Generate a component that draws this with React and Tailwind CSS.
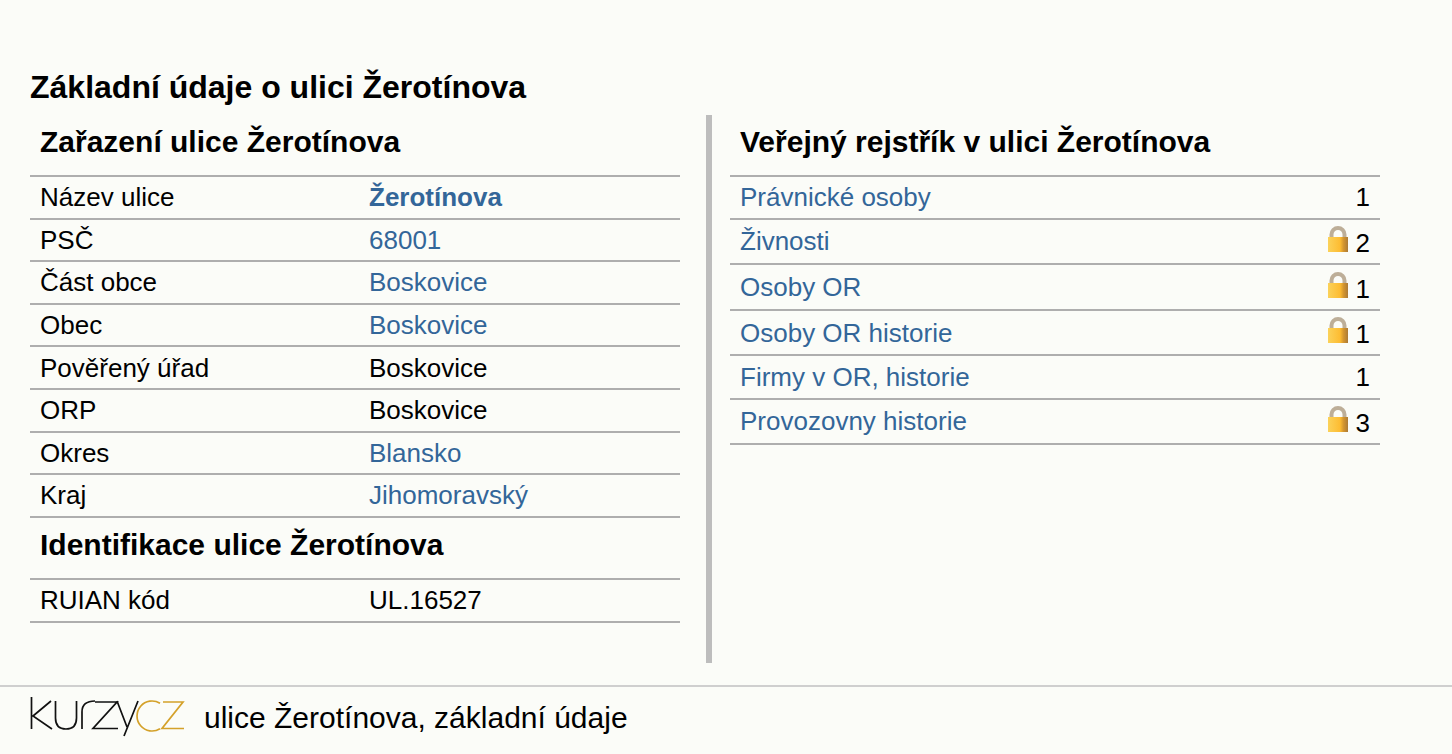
const Lock = () => (
  <svg width="20" height="26" viewBox="0 0 20 26" className="mb-[5px] block shrink-0">
    <defs>
      <linearGradient id="lockBody" x1="0" x2="1" y1="0" y2="0">
        <stop offset="0" stopColor="#fbd25a" />
        <stop offset="0.6" stopColor="#fdbc32" />
        <stop offset="0.78" stopColor="#d3952f" />
        <stop offset="1" stopColor="#ab7a36" />
      </linearGradient>
    </defs>
    <path d="M3.5 12V8.5a6.5 6.5 0 0 1 13 0V12" fill="none" stroke="#bdae98" strokeWidth="4" />
    <rect x="0" y="11" width="20" height="15" fill="url(#lockBody)" />
  </svg>
);

const Logo = () => (
  <svg width="156" height="44" viewBox="0 0 156 44" className="mb-[2px] shrink-0" fill="none" strokeWidth="1.7">
    <g stroke="#111111">
      <path d="M1.5 2V34M21 6L3 21L22 34" />
      <path d="M25.5 6V23Q25.5 34 36 34Q46.5 34 46.5 23V6" />
      <path d="M52 34V17Q52 6 65 6" />
      <path d="M65 7H87L63 33.5H88" />
      <path d="M87 6L97 32M108 6L94 41" />
    </g>
    <g stroke="#d4a12a">
      <path d="M130 8.3A15 15 0 1 0 130 33.7" />
      <path d="M133 7H153L132 33.5H154" />
    </g>
  </svg>
);

const linkCls = 'text-[#336699]';

const left = [
  ['Název ulice', 'Žerotínova', 'link font-bold'],
  ['PSČ', '68001', 'link'],
  ['Část obce', 'Boskovice', 'link'],
  ['Obec', 'Boskovice', 'link'],
  ['Pověřený úřad', 'Boskovice', ''],
  ['ORP', 'Boskovice', ''],
  ['Okres', 'Blansko', 'link'],
  ['Kraj', 'Jihomoravský', 'link'],
];

// label offset differs row by row in the original, so it travels with the row
const right = [
  ['Právnické osoby', 1, false, 'h-[43px] pb-[2px]', ''],
  ['Živnosti', 2, true, 'h-[45px]', 'mb-[2px]'],
  ['Osoby OR', 1, true, 'h-[46px]', ''],
  ['Osoby OR historie', 1, true, 'h-[45px]', ''],
  ['Firmy v OR, historie', 1, false, 'h-[44px]', ''],
  ['Provozovny historie', 3, true, 'h-[45px]', 'mb-[2px]'],
];

const LeftRow = ({ label, value, kind, className = 'h-[42.6px]' }) => (
  <div className={`flex items-center border-b-2 border-[#aeaeae] pl-[10px] ${className}`}>
    <div className="w-[329px]">{label}</div>
    <div className={kind.includes('link') ? `${linkCls} ${kind.includes('bold') ? 'font-bold' : ''}` : ''}>{value}</div>
  </div>
);

export default function App() {
  return (
    <div className="flex h-[754px] flex-col overflow-hidden bg-[#fbfcf8] text-[26px] leading-[30px] text-black font-['Liberation_Sans',Arial,sans-serif]">
      <div className="flex-1 pl-[30px] pt-[68px]">
        <h1 className="text-[32px] font-bold leading-[38px]">Základní údaje o ulici Žerotínova</h1>
        <div className="mt-[9px] flex">
          <div className="h-[548px] w-[650px]">
            <h2 className="pl-[10px] pt-[10px] text-[30px] font-bold leading-[34px]">Zařazení ulice Žerotínova</h2>
            <div className="mt-[16px] border-t-2 border-[#aeaeae]">
              {left.map(([label, value, kind]) => (
                <LeftRow key={label} label={label} value={value} kind={kind} />
              ))}
            </div>
            <h2 className="pl-[10px] pt-[10px] text-[30px] font-bold leading-[34px]">Identifikace ulice Žerotínova</h2>
            <div className="mt-[16px] border-t-2 border-[#aeaeae]">
              <LeftRow label="RUIAN kód" value="UL.16527" kind="" className="h-[43px]" />
            </div>
          </div>
          <div className="ml-[26px] h-[548px] w-[6px] bg-[#bdbdbd]" />
          <div className="ml-[18px] w-[650px]">
            <h2 className="pl-[10px] pt-[10px] text-[30px] font-bold leading-[34px]">Veřejný rejstřík v ulici Žerotínova</h2>
            <div className="mt-[16px] border-t-2 border-[#aeaeae]">
              {right.map(([label, count, locked, height, labelCls]) => (
                <div key={label} className={`flex items-center justify-between border-b-2 border-[#aeaeae] pl-[10px] pr-[10px] ${height}`}>
                  <span className={`${linkCls} ${labelCls}`}>{label}</span>
                  <span className="flex items-center gap-[7.5px]">
                    {locked && <Lock />}
                    <span className={locked ? 'pt-[3px]' : ''}>{count}</span>
                  </span>
                </div>
              ))}
            </div>
          </div>
        </div>
      </div>
      <div className="flex h-[69px] items-center border-t-2 border-[#cfcfcf] pb-[6px] pl-[30px]">
        <Logo />
        <span className="ml-[18px] text-[30px]">ulice Žerotínova, základní údaje</span>
      </div>
    </div>
  );
}
